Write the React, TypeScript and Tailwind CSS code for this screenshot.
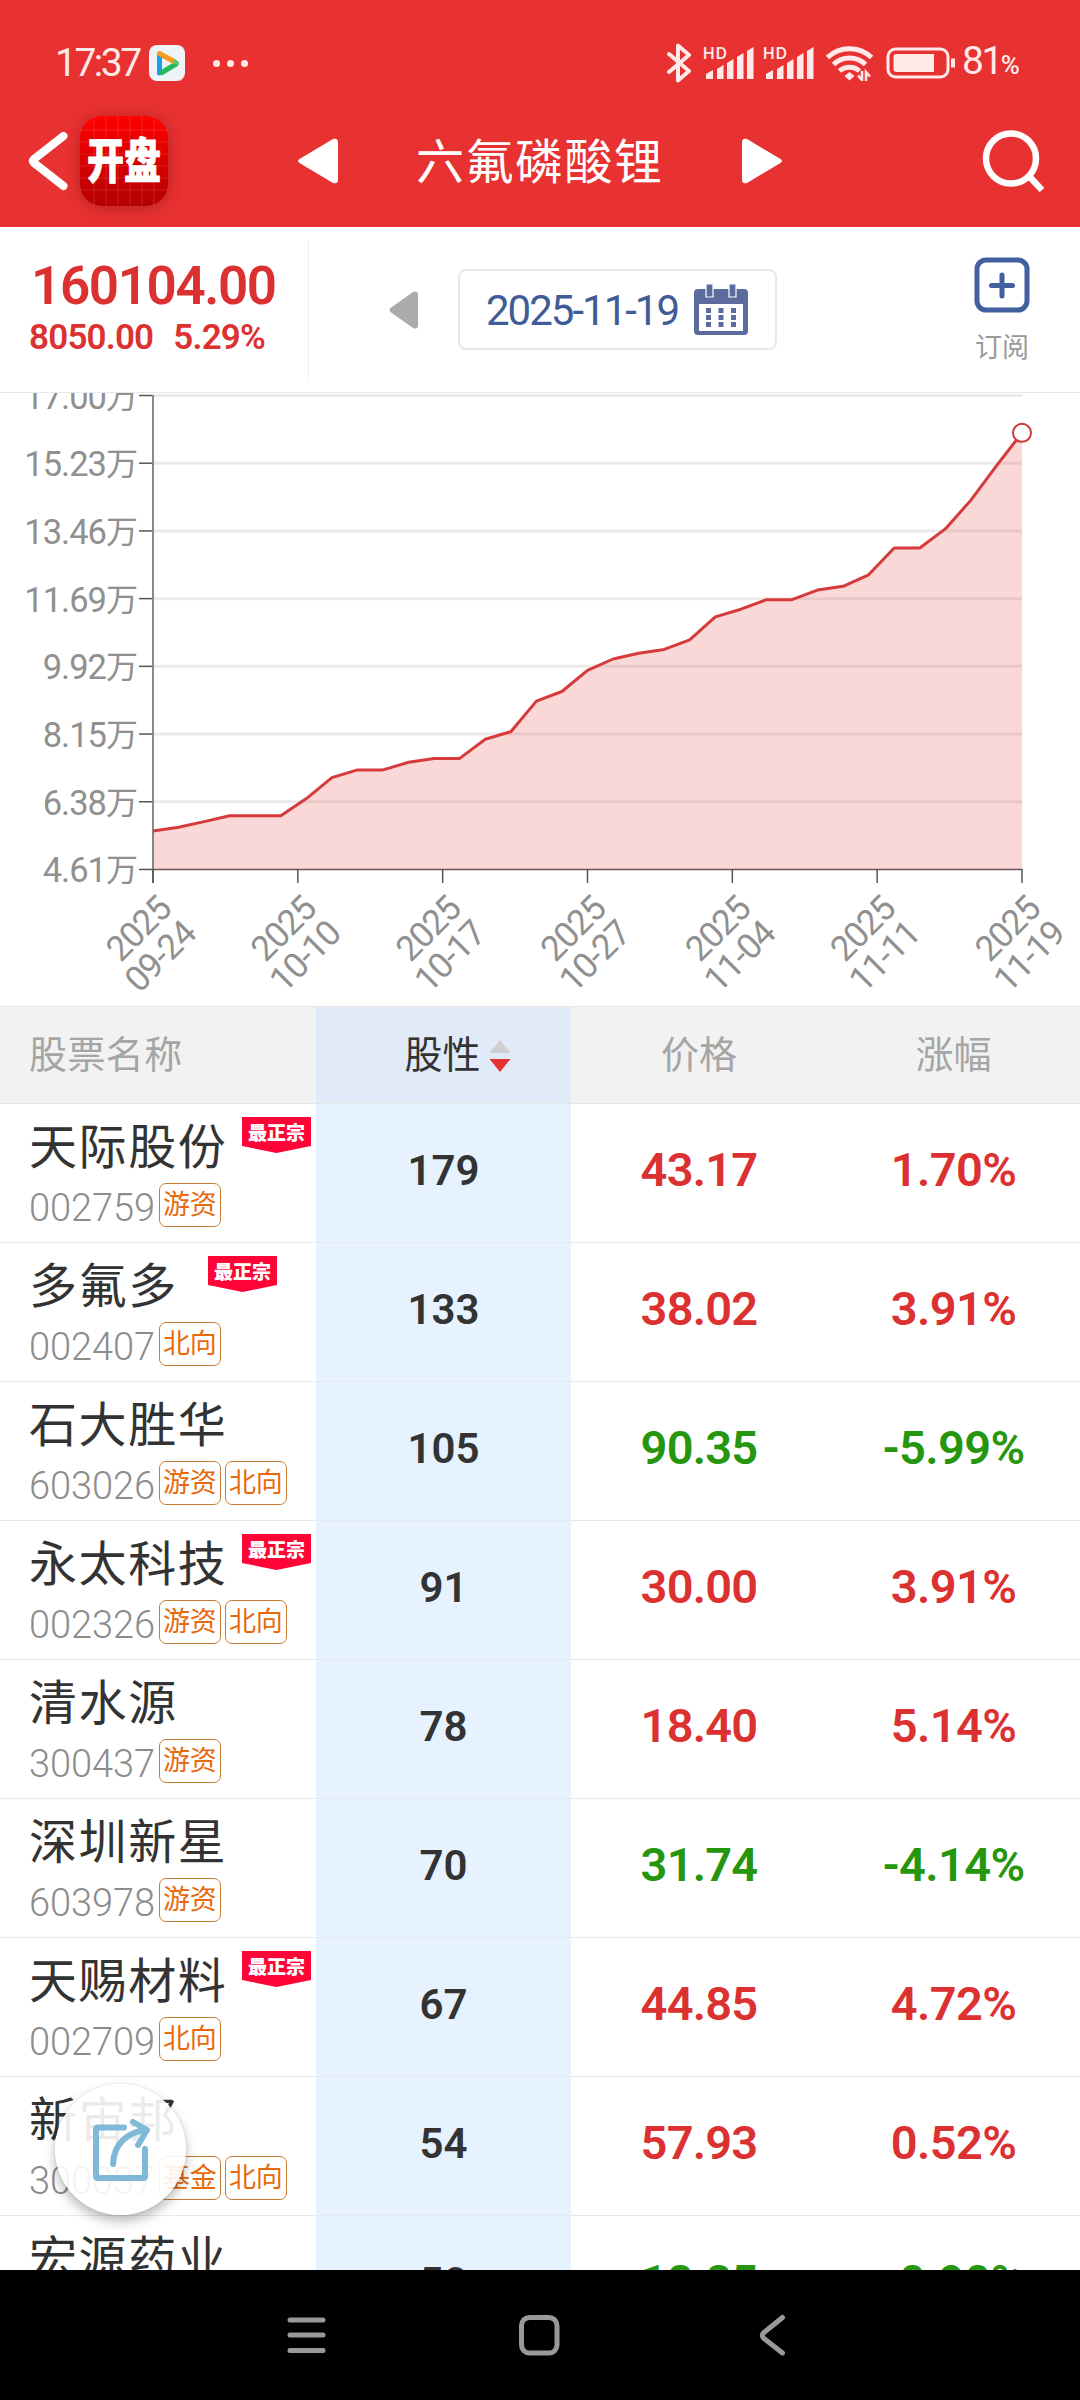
import React from 'react';

const series = [
    5.6, 5.7, 5.85, 6.0, 6.0, 6.0, 6.45, 7.0, 7.2, 7.2, 7.4, 7.5, 7.5, 8.0, 8.2, 9.0, 9.25, 9.8,
    10.1, 10.25, 10.35, 10.6, 11.2, 11.4, 11.65, 11.65, 11.9, 12.0, 12.3, 13.0, 13.0, 13.5, 14.25, 15.15, 16.01,
];

const yLabels = ['17.00', '15.23', '13.46', '11.69', '9.92', '8.15', '6.38', '4.61'];
const xLabels = ['09-24', '10-10', '10-17', '10-27', '11-04', '11-11', '11-19'];

type Stock = {
    name: string;
    code: string;
    tags: string[];
    best?: boolean;
    score: string;
    price: string;
    change: string;
};

const stocks: Stock[] = [
    { name: '天际股份', code: '002759', tags: ['游资'], best: true, score: '179', price: '43.17', change: '1.70%' },
    { name: '多氟多', code: '002407', tags: ['北向'], best: true, score: '133', price: '38.02', change: '3.91%' },
    { name: '石大胜华', code: '603026', tags: ['游资', '北向'], score: '105', price: '90.35', change: '-5.99%' },
    { name: '永太科技', code: '002326', tags: ['游资', '北向'], best: true, score: '91', price: '30.00', change: '3.91%' },
    { name: '清水源', code: '300437', tags: ['游资'], score: '78', price: '18.40', change: '5.14%' },
    { name: '深圳新星', code: '603978', tags: ['游资'], score: '70', price: '31.74', change: '-4.14%' },
    { name: '天赐材料', code: '002709', tags: ['北向'], best: true, score: '67', price: '44.85', change: '4.72%' },
    { name: '新宙邦', code: '300037', tags: ['基金', '北向'], score: '54', price: '57.93', change: '0.52%' },
    { name: '宏源药业', code: '301246', tags: ['游资'], score: '50', price: '18.85', change: '-0.90%' },
];

const Signal = () => (
    <svg className="overflow-visible" width="50" height="36" viewBox="0 0 50 36" fill="currentColor">
        <text x="-1" y="14" fontSize="15.5" fontWeight="600" fontFamily="Inter, sans-serif" textLength="24">HD</text>
        <path d="M2 29l7-4v9H2zM13 24l6.500-4v14H13zM23 18l6.500-4v20H23zM33 12l6.500-4v26H33zM43 6l6.500-4v32H43z" />
    </svg>
);

const StatusBar = () => (
    <div className="flex h-[126px] items-center text-[#ffe9e9]">
        <span className="ml-[55px] w-[94px] text-[39px] leading-[46px] tracking-[-2.5px]">17:37</span>
        <svg width="36" height="36" viewBox="0 0 36 36">
            <rect width="36" height="36" rx="8" fill="#eef3f5" />
            <path d="M10.500 11v17" stroke="#1a9cf0" strokeWidth="5" strokeLinecap="round" />
            <path d="M13 27.500L27 19" stroke="#25b85c" strokeWidth="5" strokeLinecap="round" />
            <path d="M10.500 8.500L25 16.500" stroke="#f59a23" strokeWidth="5" strokeLinecap="round" />
            <path d="M26 16.500l2 1.500" stroke="#4cca6d" strokeWidth="4" strokeLinecap="round" />
        </svg>
        <div className="ml-7 flex gap-[7px]">
            <i className="h-[7px] w-[7px] rounded-full bg-current" />
            <i className="h-[7px] w-[7px] rounded-full bg-current" />
            <i className="h-[7px] w-[7px] rounded-full bg-current" />
        </div>

        <svg className="ml-auto" width="26" height="40" viewBox="0 0 26 40" fill="none" stroke="currentColor" strokeWidth="4" strokeLinejoin="round" strokeLinecap="round">
            <path d="M3 11l20 17-11 9.500V2.500L23 12 3 29" />
        </svg>
        <div className="ml-3 flex gap-2.5">
            <Signal />
            <Signal />
        </div>
        <svg className="ml-3" width="48" height="36" viewBox="0 0 48 36" fill="none" stroke="currentColor" strokeWidth="5">
            <path d="M1.500 12.500a32 32 0 0 1 44 0M7.500 19.500a23 23 0 0 1 32 0M13.500 26a15 15 0 0 1 20 0" />
            <path d="M23.500 27l-5 4 5 4.500 5-4.500z" fill="currentColor" stroke="none" />
            <path d="M36 26v9l-4-4.500M40 36v-9l4 4.500" strokeWidth="2.600" />
        </svg>
        <svg className="ml-3" width="72" height="32" viewBox="0 0 72 32" fill="none" stroke="currentColor" strokeWidth="3">
            <rect x="2" y="2" width="60" height="28" rx="7.500" />
            <path d="M10.500 7H48v18H10.500a3 3 0 0 1-3-3V10a3 3 0 0 1 3-3z" fill="currentColor" stroke="none" />
            <path d="M67 11.500v9" strokeWidth="4" />
        </svg>
        <span className="mr-[60px] ml-1 flex items-baseline text-[39px] leading-[46px] tracking-[-2.5px]">
            81<span className="text-[26px] font-medium tracking-normal">%</span>
        </span>
    </div>
);

const Logo = () => (
    <div className="flex h-[90px] w-[88px] items-center justify-center rounded-[22px] bg-gradient-to-b from-[#ff0000] to-[#b40000] shadow-[0_2px_14px_rgba(90,0,0,0.35)]">
        <svg width="88" height="90" viewBox="0 0 88 90">
            <path d="M14 0v90M26 0v90M38 0v90M50 0v90M62 0v90M74 0v90M0 14h88M0 26h88M0 38h88M0 50h88M0 62h88M0 74h88" stroke="#fff" strokeOpacity=".13" />
            <text x="44" y="62" textAnchor="middle" textLength="74" lengthAdjust="spacingAndGlyphs" fontSize="48" fontWeight="900" fill="#fff" stroke="#fff" strokeWidth=".8">开盘</text>
        </svg>
    </div>
);

const Header = () => (
    <header className="h-[227px] bg-[#e83131] text-white">
        <StatusBar />
        <div className="-mt-2.5 flex h-[90px] items-center">
            <svg className="ml-7" width="42" height="62" viewBox="0 0 42 62" fill="none" stroke="currentColor" strokeWidth="8" strokeLinecap="round" strokeLinejoin="round">
                <path d="M35.500 6L5.500 29.500q-1.500 1.500 0 3L35.500 56" />
            </svg>
            <div className="ml-2.5">
                <Logo />
            </div>
            <svg className="ml-[129px]" width="42" height="46" viewBox="0 0 42 46" fill="currentColor">
                <path d="M2.500 21L36 1q5-1.500 5 3.500v37q0 5-5 3.500L2.500 25q-3-2 0-4z" />
            </svg>
            <h1 className="ml-[77px] pt-1 text-[48px] leading-[72px] tracking-[1.5px]">六氟磷酸锂</h1>
            <svg className="ml-[77px]" width="42" height="46" viewBox="0 0 42 46" fill="currentColor">
                <path d="M39.500 21L6 1Q1 -.5 1 4.500v37q0 5 5 3.500L39.500 25q3-2 0-4z" />
            </svg>
            <svg className="mr-9 ml-auto" width="62" height="62" viewBox="0 0 62 62" fill="none" stroke="currentColor" strokeWidth="6.500">
                <circle cx="29" cy="28.500" r="25" />
                <path d="M46 45l14 15" />
            </svg>
        </div>
    </header>
);

const Summary = () => (
    <section className="flex h-[166px] items-center border-b border-[#e8e8e8] bg-white">
        <div className="flex h-[137px] w-[309px] flex-col border-r border-[#ebebeb] pl-[29px] font-semibold text-[#db3131]">
            <div className="mt-[14px] pl-0.5 text-[53px] leading-[62px] tracking-[-1.4px]">160104.00</div>
            <div className="flex gap-5 text-[35px] leading-[42px] tracking-[-0.8px]">
                <span>8050.00</span>
                <span>5.29%</span>
            </div>
        </div>
        <svg className="ml-20" width="30" height="38" viewBox="0 0 30 38" fill="#ababab">
            <path d="M1.500 17L24 1q5-2 5 3v30q0 5-5 3L1.500 21q-2-2 0-4z" />
        </svg>
        <div className="ml-[39px] flex h-[81px] w-[319px] items-center rounded-lg border-2 border-[#e8e8e8] pl-[26px] text-[#3f5c96]">
            <span className="w-[208px] pt-0.5 text-[42px] leading-[50px] tracking-[-2px]">2025-11-19</span>
            <svg width="54" height="52" viewBox="0 0 54 52">
                <path d="M4 5h46q4 0 4 4v38q0 4-4 4H4q-4 0-4-4V9q0-4 4-4z" fill="#5b6b9d" />
                <path d="M5 20h44v27H5z" fill="#fff" />
                <path d="M12 0h7v13h-7zM35 0h7v13h-7z" fill="#5b6b9d" stroke="#fff" strokeWidth="1.200" />
                <path d="M12 24h5v5h-5zM24.500 24h5v5h-5zM37 24h5v5h-5zM12 31h5v5h-5zM24.500 31h5v5h-5zM37 31h5v5h-5zM12 38h5v5h-5zM24.500 38h5v5h-5zM37 38h5v5h-5z" fill="#5b6b9d" />
            </svg>
        </div>
        <div className="mr-[50px] ml-auto flex flex-col items-center pt-[5px] text-[27px] leading-[40px] text-[#999]">
            <svg className="mb-[15px]" width="56" height="56" viewBox="0 0 56 56" fill="none" stroke="#42609f" strokeWidth="5">
                <rect x="3" y="3" width="50" height="50" rx="9" />
                <path d="M28 18v21M17.500 28.500h21" strokeLinecap="round" />
            </svg>
            订阅
        </div>
    </section>
);

const Chart = () => {
    // plot area: x 153..1022, y 2..476, value range 4.61..17.00 (万)
    const px = (i: number) => 153 + (i * 869) / (series.length - 1);
    const py = (v: number) => 476 - ((v - 4.61) / 12.39) * 474;
    const points = series.map((v, i) => `${px(i).toFixed(1)},${py(v).toFixed(1)}`).join(' ');

    return (
        <section className="h-[613px] bg-white">
            <svg width="1080" height="613" viewBox="0 0 1080 613" fontFamily="Roboto, 'Noto Sans CJK SC', sans-serif">
                {yLabels.map((label, i) => {
                    const y = 2.5 + i * 67.71;
                    return (
                        <g key={label}>
                            {i < 7 && <path d={`M153 ${y}H1022`} stroke="#ebebeb" strokeWidth="3" />}
                            <path d={`M139 ${y}h14`} stroke="#555" strokeWidth="1.500" />
                            <text x="106" y={y + 13} textAnchor="end" fontSize="34.5" letterSpacing="-1" fill="#909090">{label}</text>
                            <text x="138" y={y + 12} textAnchor="end" fontSize="32" fill="#909090">万</text>
                        </g>
                    );
                })}
                <path d="M153 2v488" stroke="#888" strokeWidth="2" />
                <polygon points={`153,476 ${points} 1022,476`} fill="#e83131" fillOpacity=".19" />
                <path d="M153 476.500h869" stroke="#6b5555" strokeWidth="1.500" />
                <polyline points={points} fill="none" stroke="#d63a3a" strokeWidth="3" strokeLinejoin="round" />
                <circle cx="1022" cy={py(16.01)} r="9" fill="#fff" stroke="#cf3a3a" strokeWidth="2" />
                {xLabels.map((label, i) => {
                    const x = 153 + i * 144.83;
                    return (
                        <g key={label}>
                            <path d={`M${x} 476v14`} stroke="#555" strokeWidth="1.500" />
                            <g transform={`translate(${x + 20} 518) rotate(-45)`} textAnchor="end" fontSize="35" letterSpacing="-1.200" fill="#909090">
                                <text>2025</text>
                                <text y="35">{label}</text>
                            </g>
                        </g>
                    );
                })}
            </svg>
        </section>
    );
};

const BestBadge = () => (
    <svg width="69" height="36" viewBox="0 0 69 36">
        <path d="M0 0h69v29L34.500 36 0 29z" fill="#ff0436" />
        <text x="34.500" y="22.500" textAnchor="middle" fontSize="19" fontWeight="900" fill="#fff">最正宗</text>
    </svg>
);

const StockRow = ({ stock }: { stock: Stock }) => {
    const color = stock.change.startsWith('-') ? 'text-[#27960f]' : 'text-[#db3131]';

    return (
        <div className="grid h-[139px] shrink-0 grid-cols-[316px_255px_256px_253px] border-b border-[#e7e9eb]">
            <div className="pl-[29px]">
                <div className="flex h-[77px]">
                    <span className="pt-[9px] text-[48px] leading-[70px] tracking-[1.6px] text-[#333]">{stock.name}</span>
                    {stock.best && (
                        <span className={stock.name.length > 3 ? 'mt-[13px] ml-[15px]' : 'mt-[13px] ml-[30px]'}>
                            <BestBadge />
                        </span>
                    )}
                </div>
                <div className="flex items-center gap-1">
                    <span className="pt-1 text-[38px] leading-[46px] font-light tracking-[-0.1px] text-[#8c8c8c]">{stock.code}</span>
                    {stock.tags.map((tag) => (
                        <span key={tag} className="flex h-[44px] w-[62px] -translate-y-px items-center justify-center rounded-[7px] border-[1.5px] border-[#c87d34] text-[27px] leading-[40px] text-[#e8690b]">
                            {tag}
                        </span>
                    ))}
                </div>
            </div>
            <div className="flex items-center justify-center bg-[#e6f2fe] pb-[5px] text-[42px] font-semibold text-[#333]">{stock.score}</div>
            <div className={`flex items-center justify-center pb-1.5 text-[47px] font-semibold tracking-[-0.8px] ${color}`}>{stock.price}</div>
            <div className={`flex items-center justify-center pb-1.5 text-[47px] font-semibold tracking-[-0.6px] ${color}`}>{stock.change}</div>
        </div>
    );
};

const StockTable = () => (
    <section className="relative flex min-h-0 flex-1 flex-col overflow-hidden bg-white">
        <div className="grid h-[98px] shrink-0 grid-cols-[316px_255px_256px_253px] border-y border-[#e6e6e6] bg-[#f2f2f2] pt-px text-[38px] text-[#a5a5a5]">
            <div className="flex items-center pl-[29px] tracking-[0.4px]">股票名称</div>
            <div className="-mt-px flex items-center justify-center gap-2 bg-[#e0ebf7] pt-px pl-7 text-[#333]">
                股性
                <svg width="22" height="32" viewBox="0 0 22 32">
                    <path d="M11 0l10.500 13H.5z" fill="#cfcfcf" />
                    <path d="M11 32l10.500-13H.5z" fill="#e83131" />
                </svg>
            </div>
            <div className="flex items-center justify-center">价格</div>
            <div className="flex items-center justify-center">涨幅</div>
        </div>
        {stocks.map((stock) => (
            <StockRow key={stock.code} stock={stock} />
        ))}

        {/* Floating share button */}
        <button className="absolute bottom-[55px] left-[55px] flex h-[131px] w-[131px] items-center justify-center rounded-full bg-white/90 shadow-[0_6px_12px_rgba(0,0,0,0.28),0_0_3px_rgba(0,0,0,0.1)]">
            <svg width="60" height="64" viewBox="0 0 60 64" fill="none" stroke="#80b8d8" strokeWidth="6" strokeLinecap="round" strokeLinejoin="round">
                <path d="M33 9.500H7q-2 0-2 2V58q0 2 2 2h45q2 0 2-2V31" />
                <path d="M22 46c1-22 16-32 33-34M42 4l14 8-9 15" />
            </svg>
        </button>
    </section>
);

const NavBar = () => (
    <nav className="h-[130px] shrink-0 bg-black">
        <svg width="1080" height="130" viewBox="0 0 1080 130" fill="none" stroke="#999" strokeWidth="5" strokeLinecap="round" strokeLinejoin="round">
            <path d="M290 50h33M290 65h33M290 80.500h33" />
            <rect x="521.500" y="47.500" width="35.500" height="35.500" rx="8" />
            <path d="M782.500 47.500L764 62.500q-3.500 3 0 6L782.500 83" />
        </svg>
    </nav>
);

const App = () => {
    return (
        <main className="flex h-[2400px] w-[1080px] flex-col overflow-hidden bg-white font-[Roboto,'Noto_Sans_CJK_SC',sans-serif]">
            <Header />
            <Summary />
            <Chart />
            <StockTable />
            <NavBar />
        </main>
    );
};

export default App;
